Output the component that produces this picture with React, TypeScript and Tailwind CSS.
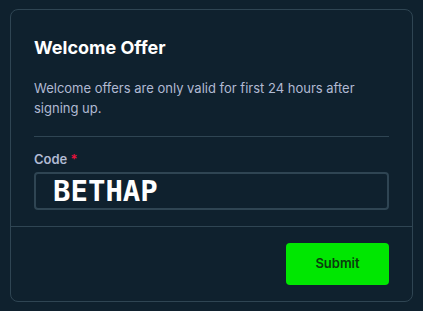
export default function App() {
  return (
    <div className="w-[423px] h-[311px] bg-[#0f212e] pt-[9px] px-[10px] font-['Inter',sans-serif]">
      <div className="h-[293px] rounded-lg border border-[#2f4553] bg-[#0f212e] flex flex-col">
        {/* Body */}
        <div className="px-[23px] pt-[26px]">
          <h2 className="text-[18px] font-bold text-white leading-6">Welcome Offer</h2>
          <p className="mt-[18px] text-[13px] leading-5 text-[#b1bad3]">
            Welcome offers are only valid for first 24 hours after signing up.
          </p>
          <div className="mt-[18px] h-px bg-[#2f4553]" />
          <label className="mt-[14px] block text-[13px] font-semibold leading-4 text-[#b1bad3]">
            Code <span className="text-[#e9113c]">*</span>
          </label>
          <div className="mt-[5px] h-[38px] rounded border-2 border-[#2f4553] flex items-center pl-[17px]">
            <span className="font-['DejaVu_Sans_Mono',monospace] font-bold text-[29px] leading-none text-white">
              BETHAP
            </span>
          </div>
        </div>
        <div className="mt-[16px] h-px bg-[#2f4553]" />
        {/* Footer */}
        <div className="flex justify-end px-[23px] pt-4">
          <button className="w-[103px] h-[42px] rounded bg-[#00e701] text-[13px] font-semibold text-[#0b3a0e]">
            Submit
          </button>
        </div>
      </div>
    </div>
  )
}
